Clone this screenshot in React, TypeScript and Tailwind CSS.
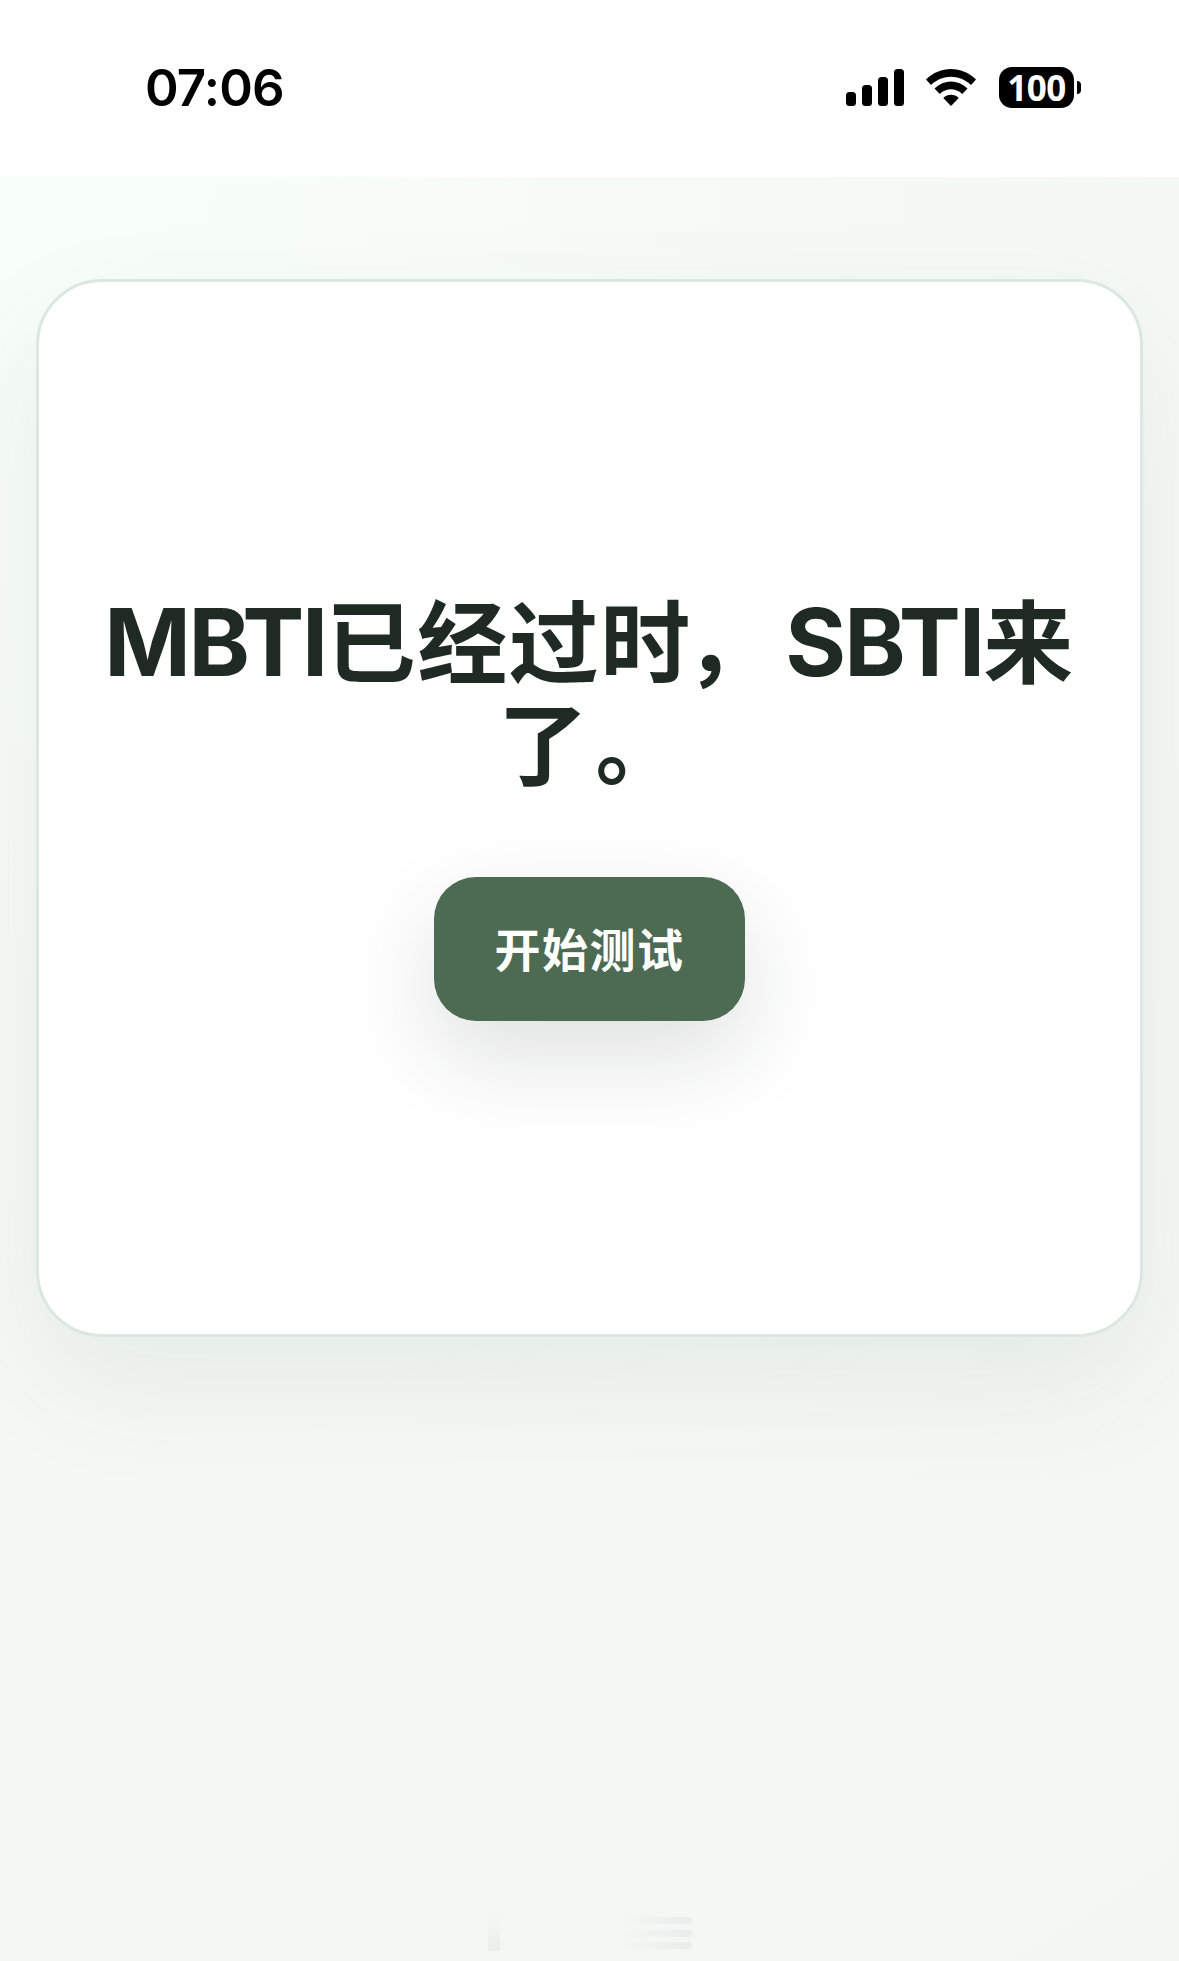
import React from 'react';

const SignalIcon = () => (
  <svg width="58" height="38" viewBox="0 0 58 38" fill="currentColor">
    <rect x="0" y="23" width="10" height="14" rx="3.500" />
    <rect x="16" y="16" width="10" height="21" rx="3.500" />
    <rect x="32" y="8" width="10" height="29" rx="3.500" />
    <rect x="48" y="0" width="10" height="37" rx="3.500" />
  </svg>
);

const WifiIcon = () => (
  <svg width="50" height="37" viewBox="0 0 50 37" fill="currentColor">
    <path d="M0 10.500C14-3.500 36-3.500 50 10.500L45 16C33.500 5 16.500 5 5 16Z" />
    <path d="M8.500 19.500C18 10.300 32 10.300 41.500 19.500L36.200 25C29.700 18.800 20.300 18.800 13.800 25Z" />
    <path d="M17.300 29C21.500 24.800 28.500 24.800 32.700 29L25 37Z" />
  </svg>
);

const StatusBar = () => {
  return (
    <div className="flex h-[177px] items-start justify-between bg-white pl-[145px] pr-[98px] text-black">
      <div className="mt-[58px] text-[51px] font-semibold leading-[60px] tracking-[-0.8px]">07:06</div>
      <div className="mt-[67px] flex items-start">
        <div className="mt-0.5">
          <SignalIcon />
        </div>
        <div className="ml-[22px] mt-0.5">
          <WifiIcon />
        </div>
        {/* Battery */}
        <div className="ml-[23px] flex h-[41px] items-center">
          <div className="flex h-[41px] w-[75px] items-center justify-center rounded-[13px] bg-black pb-px font-['Noto_Sans','Open_Sans',sans-serif] text-[35px] font-bold leading-none tracking-[-0.5px] text-white">
            100
          </div>
          <div className="ml-[3px] h-[13px] w-1 rounded-r-full bg-black" />
        </div>
      </div>
    </div>
  );
};

// Faint smudge near the bottom edge
const Smudge = () => (
  <div className="flex h-9 w-[204px] items-stretch justify-between">
    <div className="w-3 bg-gradient-to-b from-transparent to-[#e9eeec]" />
    <div className="flex w-[70px] flex-col justify-between py-0.5">
      <div className="h-[7px] rounded-full bg-gradient-to-r from-transparent to-[#e9eceb]" />
      <div className="h-[7px] rounded-full bg-gradient-to-r from-transparent to-[#e9eceb]" />
      <div className="h-[7px] rounded-full bg-gradient-to-r from-transparent to-[#e9eceb]" />
    </div>
  </div>
);

const App = () => {
  return (
    <div className="flex h-[1961px] w-[1179px] flex-col overflow-hidden bg-white font-['Inter','Noto_Sans_CJK_SC',sans-serif]">
      <StatusBar />

      <main className="flex flex-1 flex-col items-center bg-[radial-gradient(circle_at_top_left,#f8fff8_0,#f6faf7_36%,#f3f7f4_100%)] px-9 pt-[102px]">
        <section className="flex h-[1058px] w-full flex-col items-center rounded-[66px] border-[3px] border-[#dbe8e0] bg-white pt-[311px] shadow-[0_48px_120px_rgba(47,73,55,0.08)]">
          <h1 className="h-[204px] whitespace-nowrap text-center text-[90px] font-bold leading-[102px] tracking-[1.5px] text-[#1e2a22]">
            <span className="text-[93px] leading-none tracking-[-2.4px]">MBTI</span>已经过
            <span className="mr-[15px] leading-none tracking-[-5px]">时，</span>
            <span className="text-[93px] leading-none tracking-[-1.8px]">SBTI</span>来
            <br />
            了<span className="ml-1.5 text-[84px] leading-none">。</span>
          </h1>
          <button className="mt-20 h-36 w-[311px] rounded-[42px] bg-[#4d6a53] pt-0.5 text-[46px] font-bold leading-[60px] tracking-[1.5px] text-white shadow-[0_36px_90px_rgba(30,42,34,0.14)]">
            开始测试
          </button>
        </section>

        <div className="mt-auto flex w-full justify-center pb-2.5">
          <Smudge />
        </div>
      </main>
    </div>
  );
};

export default App;
